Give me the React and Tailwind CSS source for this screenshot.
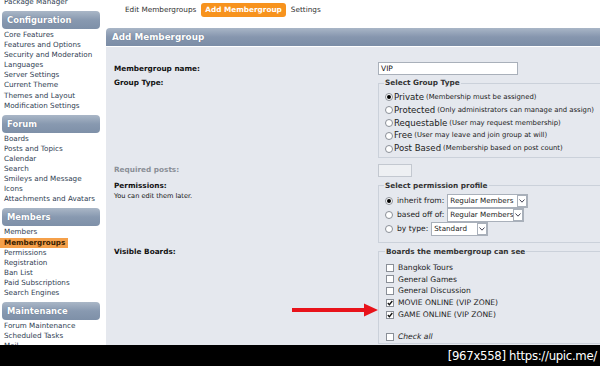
import React from "react";

const font = "font-['DejaVu_Sans',Verdana,sans-serif]";

function SideHeader({ children }) {
  return (
    <div className="mx-[2px] mt-[4px] mb-[1px] h-[18px] rounded-[4px] bg-linear-to-b from-[#aab7c7] via-[#8899b0] to-[#7e90a8] px-[5px] flex items-center text-white font-bold text-[8.4px] leading-[10px] [text-shadow:0_0_1px_#5d6d84]">
      {children}
    </div>
  );
}

function SideLinks({ items, active }) {
  return (
    <ul className="px-[4px] text-[7.2px] leading-[10.1px] text-[#2f3d52]">
      {items.map((it) =>
        it === active ? (
          <li key={it} className="-ml-[4px] pl-[4px] w-[68px] bg-[#f5a04a] font-bold text-[#3a1e00]">
            {it}
          </li>
        ) : (
          <li key={it}>{it}</li>
        )
      )}
    </ul>
  );
}

function Radio({ checked }) {
  return (
    <span className="inline-flex w-[8px] h-[8px] rounded-full border border-[#8a8f97] bg-white items-center justify-center shrink-0">
      {checked && <span className="w-[4px] h-[4px] rounded-full bg-black" />}
    </span>
  );
}

function Check({ checked }) {
  return (
    <span className="inline-flex w-[8px] h-[8px] border border-[#8a8f97] bg-white items-center justify-center mr-[4px] shrink-0">
      {checked && (
        <svg width="6" height="6" viewBox="0 0 6 6">
          <path d="M0.8 3 L2.4 4.7 L5.3 1" stroke="#111" strokeWidth="1.3" fill="none" />
        </svg>
      )}
    </span>
  );
}

function Select({ value, w }) {
  return (
    <span className={`inline-flex h-[14px] ${w} border border-[#a9b0ba] bg-white items-center text-[7.2px] leading-[10px] text-[#222] shrink-0`}>
      <span className="flex-1 pl-[2px] whitespace-nowrap overflow-hidden">{value}</span>
      <span className="w-[10px] h-[12px] border border-[#a9b0ba] flex items-center justify-center shrink-0">
        <svg width="6" height="4" viewBox="0 0 6 4">
          <path d="M0.5 0.5 L3 3.2 L5.5 0.5" stroke="#445" strokeWidth="1" fill="none" />
        </svg>
      </span>
    </span>
  );
}

function Fieldset({ title, children, className = "" }) {
  return (
    <fieldset className={`border border-[#cbd1da] w-[260px] shrink-0 ${className}`}>
      <legend className="-ml-[1px] px-[1px] font-bold text-[7.3px] leading-[10px] text-[#333]">{title}</legend>
      {children}
    </fieldset>
  );
}

export default function App() {
  return (
    <div className={`relative w-[600px] h-[366px] overflow-hidden bg-white leading-[10px] ${font}`}>
      <div className="flex h-[345px] overflow-hidden">
        {/* Sidebar */}
        <aside className="w-[102px] shrink-0 -mt-[3px]">
          <div className="px-[4px] text-[7.2px] leading-[10px] text-[#2f3d52]">Package Manager</div>
          <div className="mt-[1px]">
            <SideHeader>Configuration</SideHeader>
          </div>
          <SideLinks
            items={[
              "Core Features",
              "Features and Options",
              "Security and Moderation",
              "Languages",
              "Server Settings",
              "Current Theme",
              "Themes and Layout",
              "Modification Settings",
            ]}
          />
          <SideHeader>Forum</SideHeader>
          <SideLinks
            items={[
              "Boards",
              "Posts and Topics",
              "Calendar",
              "Search",
              "Smileys and Message",
              "Icons",
              "Attachments and Avatars",
            ]}
          />
          <SideHeader>Members</SideHeader>
          <SideLinks
            active="Membergroups"
            items={[
              "Members",
              "Membergroups",
              "Permissions",
              "Registration",
              "Ban List",
              "Paid Subscriptions",
              "Search Engines",
            ]}
          />
          <SideHeader>Maintenance</SideHeader>
          <SideLinks items={["Forum Maintenance", "Scheduled Tasks", "Mail"]} />
        </aside>

        {/* Main */}
        <main className="flex-1 pl-[4px] flex flex-col min-w-0">
          <div className="h-[20px] shrink-0 flex items-center pl-[19px] gap-[5px] text-[7.3px] leading-[10px] text-[#333]">
            <span>Edit Membergroups</span>
            <span className="bg-[#f7931e] text-white font-bold px-[4px] py-[2px] rounded-[3px]">Add Membergroup</span>
            <span>Settings</span>
          </div>
          <div className="mt-[8px] h-[18px] shrink-0 rounded-tl-[4px] bg-linear-to-b from-[#a9b6c7] via-[#8696ae] to-[#7b8da6] flex items-center pl-[6px] text-white font-bold text-[8.8px] leading-[10px] [text-shadow:0_0_1px_#5d6d84]">
            Add Membergroup
          </div>
          <div className="mt-[1px] flex-1 min-h-0 overflow-hidden bg-[#e5e8ee] pl-[8px] pt-[15px] text-[7.3px] leading-[10px] text-[#111]">
            {/* Name */}
            <div className="flex items-center">
              <div className="w-[264px] shrink-0 font-bold">Membergroup name:</div>
              <div className="w-[140px] h-[13px] shrink-0 border border-[#a9b0ba] bg-white text-[7.5px] pl-[2px] flex items-center">VIP</div>
            </div>
            {/* Group type */}
            <div className="flex mt-[3px]">
              <div className="w-[264px] shrink-0 font-bold">Group Type:</div>
              <Fieldset title="Select Group Type" className="pl-[6px] pb-[2px]">
                <div className="flex flex-col mt-[3px] text-[8.6px] leading-[12.8px] text-[#222] whitespace-nowrap">
                  <div className="flex items-center"><Radio checked /><span className="ml-[1px]">Private</span><span className="text-[6.85px] ml-[2px]">(Membership must be assigned)</span></div>
                  <div className="flex items-center"><Radio /><span className="ml-[1px]">Protected</span><span className="text-[6.85px] ml-[2px]">(Only administrators can manage and assign)</span></div>
                  <div className="flex items-center"><Radio /><span className="ml-[1px]">Requestable</span><span className="text-[6.85px] ml-[2px]">(User may request membership)</span></div>
                  <div className="flex items-center"><Radio /><span className="ml-[1px]">Free</span><span className="text-[6.85px] ml-[2px]">(User may leave and join group at will)</span></div>
                  <div className="flex items-center"><Radio /><span className="ml-[1px]">Post Based</span><span className="text-[6.85px] ml-[2px]">(Membership based on post count)</span></div>
                </div>
              </Fieldset>
            </div>
            {/* Required posts */}
            <div className="flex items-center mt-[6px]">
              <div className="w-[264px] shrink-0 font-bold text-[#8a8f97]">Required posts:</div>
              <div className="w-[34px] h-[13px] shrink-0 border border-[#c3c8d0] bg-[#eef0f3]" />
            </div>
            {/* Permissions */}
            <div className="flex mt-[4px]">
              <div className="w-[264px] shrink-0">
                <div className="font-bold">Permissions:</div>
                <div className="text-[6.6px] leading-[11px]">You can edit them later.</div>
              </div>
              <Fieldset title="Select permission profile" className="pl-[6px] pb-[5px]">
                <div className="flex flex-col mt-[3px] text-[7.6px] leading-[14.2px] text-[#222] whitespace-nowrap">
                  <div className="flex items-center gap-[3px]"><Radio checked /><span className="ml-[1px]">inherit from:</span><Select value="Regular Members" w="w-[81px]" /></div>
                  <div className="flex items-center gap-[3px]"><Radio /><span className="ml-[1px]">based off of:</span><Select value="Regular Members" w="w-[77px]" /></div>
                  <div className="flex items-center gap-[3px]"><Radio /><span className="ml-[1px]">by type:</span><Select value="Standard" w="w-[57px]" /></div>
                </div>
              </Fieldset>
            </div>
            {/* Visible boards */}
            <div className="flex mt-[4px]">
              <div className="w-[264px] shrink-0 font-bold">Visible Boards:</div>
              <Fieldset title="Boards the membergroup can see" className="pl-[7px]">
                <div className="flex flex-col mt-[5px] text-[7.6px] leading-[11.9px] text-[#222] whitespace-nowrap">
                  <div className="flex items-center"><Check />Bangkok Tours</div>
                  <div className="flex items-center"><Check />General Games</div>
                  <div className="flex items-center"><Check />General Discussion</div>
                  <div className="flex items-center"><Check checked />MOVIE ONLINE (VIP ZONE)</div>
                  <div className="flex items-center"><Check checked />GAME ONLINE (VIP ZONE)</div>
                  <div className="flex items-center mt-[10px]"><Check /><i>Check all</i></div>
                </div>
              </Fieldset>
            </div>
          </div>
        </main>
      </div>

      {/* annotation arrow */}
      <svg className="absolute left-[290px] top-[302px]" width="90" height="16" viewBox="0 0 90 16">
        <path d="M2 6 L74 6 L74 1.5 L88 8 L74 14.5 L74 10 L2 10 Z" fill="#e8131a" />
      </svg>

      {/* image host footer */}
      <div className="h-[21px] bg-black flex items-center justify-end pr-[3px] text-white text-[13px] leading-[16px] font-['DejaVu_Sans_Condensed','DejaVu_Sans',sans-serif] tracking-[-0.3px]">
        [967x558] https://upic.me/
      </div>
    </div>
  );
}
